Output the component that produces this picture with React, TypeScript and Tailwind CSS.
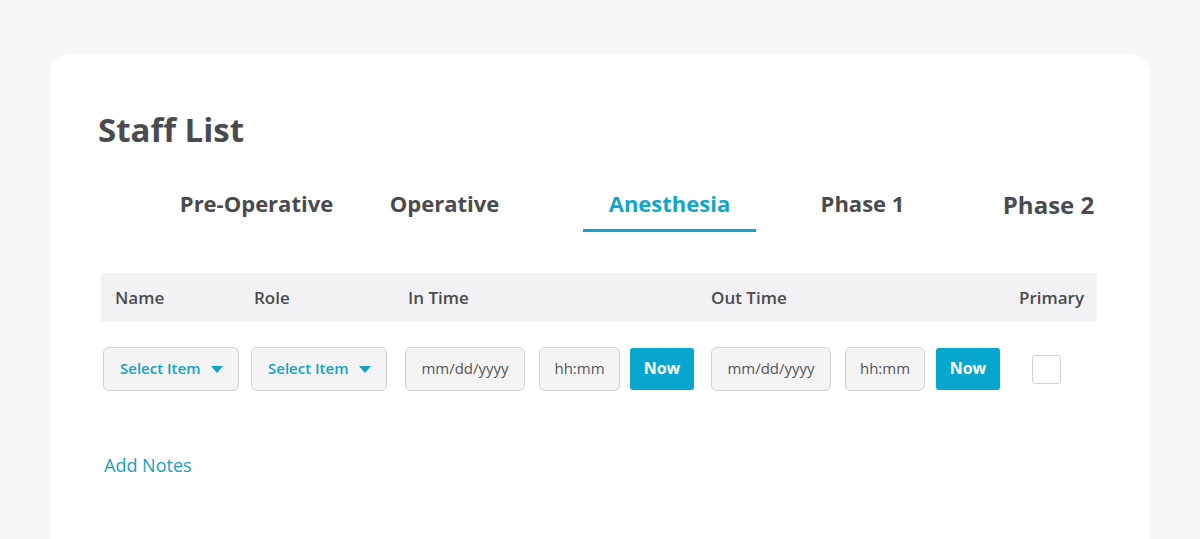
import React from "react";

const font = { fontFamily: '"Open Sans", "Noto Sans", sans-serif' };

function SelectBox() {
  return (
    <button
      type="button"
      className="flex h-[44px] w-[136px] shrink-0 items-center rounded-[6px] border border-[#d2d2d2] bg-[#f4f4f4] pl-[16px] pb-[2px] text-[15px] font-semibold text-[#12a3c8]"
    >
      <span>Select Item</span>
      <svg width="12" height="7" viewBox="0 0 12 7" className="ml-[11px] mt-[2px]">
        <path d="M0 0 H12 L6 7 Z" fill="#12a3c8" />
      </svg>
    </button>
  );
}

function Field({ w, text }: { w: string; text: string }) {
  return (
    <div
      className={`flex h-[44px] shrink-0 items-center justify-center rounded-[6px] border border-[#d2d2d2] bg-[#f4f4f4] pb-[2px] text-[15px] text-[#555558] ${w}`}
    >
      {text}
    </div>
  );
}

function NowButton() {
  return (
    <button
      type="button"
      className="flex h-[42px] w-[64px] shrink-0 items-center justify-center rounded-[3px] bg-[#06a6cf] pb-[2px] text-[16px] font-bold text-white"
    >
      Now
    </button>
  );
}

const tabs = [
  { label: "Pre-Operative", ml: "ml-[120px]", size: "text-[22px]" },
  { label: "Operative", ml: "ml-[15px]", size: "text-[22px]" },
  { label: "Anesthesia", ml: "ml-[52px]", size: "text-[22px]", active: true },
  { label: "Phase 1", ml: "ml-[20px]", size: "text-[22px]" },
  { label: "Phase 2", ml: "ml-[13px]", size: "text-[24px] pt-[2px]" },
];

export default function App() {
  return (
    <div
      className="h-[539px] overflow-hidden bg-[#f7f7f7] px-[50px] pt-[54px]"
      style={font}
    >
      <div className="h-[520px] rounded-[20px] bg-white pt-[56px]">
        {/* Title */}
        <h1 className="pl-[48px] text-[33px] font-bold leading-[40px] text-[#4a4b4f]">
          Staff List
        </h1>

        {/* Tabs */}
        <div className="mt-[37px] flex items-start">
          {tabs.map((tab) => (
            <div
              key={tab.label}
              className={[
                "flex w-[173px] flex-col items-center pb-[10px]",
                tab.ml,
                tab.active ? "border-b-[3px] border-[#12a5cb]" : "",
              ].join(" ")}
            >
              <span
                className={[
                  "font-bold leading-[32px]",
                  tab.size,
                  tab.active ? "text-[#12a5cb]" : "text-[#4a4b4f]",
                ].join(" ")}
              >
                {tab.label}
              </span>
            </div>
          ))}
        </div>

        {/* Table */}
        <div className="ml-[51px] mr-[53px] mt-[41px]">
          <div className="flex h-[49px] items-center bg-[#f2f2f4] pl-[14px] pr-[13px] text-[17px] font-semibold text-[#4a4b4f]">
            <span className="w-[139px]">Name</span>
            <span className="w-[154px]">Role</span>
            <span className="w-[303px]">In Time</span>
            <span className="flex-1">Out Time</span>
            <span>Primary</span>
          </div>

          <div className="mt-[25px] flex items-center pl-[2px]">
            <SelectBox />
            <div className="ml-[12px]">
              <SelectBox />
            </div>
            <div className="ml-[18px]">
              <Field w="w-[120px]" text="mm/dd/yyyy" />
            </div>
            <div className="ml-[14px]">
              <Field w="w-[81px]" text="hh:mm" />
            </div>
            <div className="ml-[10px]">
              <NowButton />
            </div>
            <div className="ml-[17px]">
              <Field w="w-[120px]" text="mm/dd/yyyy" />
            </div>
            <div className="ml-[14px]">
              <Field w="w-[80px]" text="hh:mm" />
            </div>
            <div className="ml-[11px]">
              <NowButton />
            </div>
            <input
              type="checkbox"
              className="ml-[32px] h-[29px] w-[29px] appearance-none rounded-[3px] border border-[#d2d2d2] bg-white"
            />
          </div>

          <a className="ml-[3px] mt-[62px] block text-[18px] leading-[24px] text-[#1a9fc4]">
            Add Notes
          </a>
        </div>
      </div>
    </div>
  );
}
